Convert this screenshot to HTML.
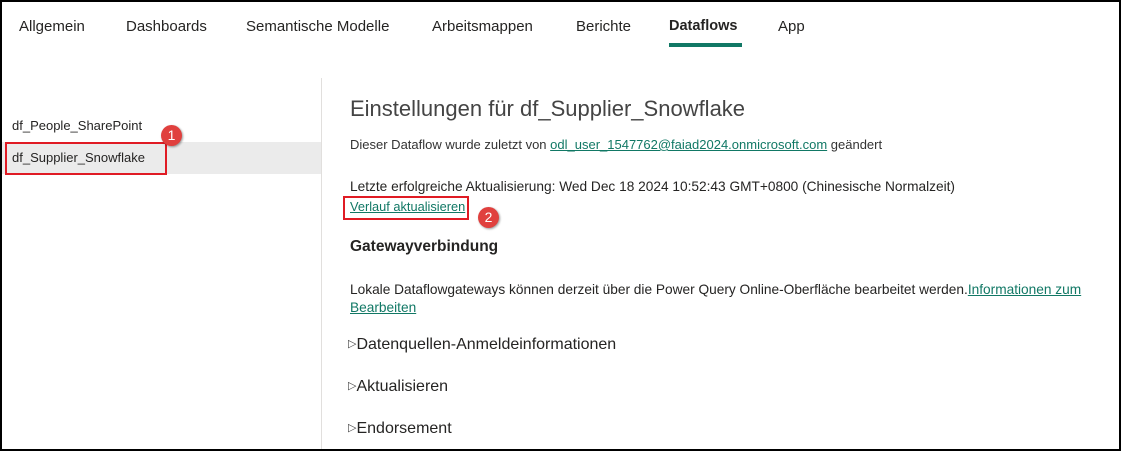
<!DOCTYPE html>
<html><head><meta charset="utf-8"><style>
body{margin:0;width:1121px;height:451px;overflow:hidden;background:#fff;font-family:"Liberation Sans",sans-serif;color:#252423;position:relative}
.frame{position:absolute;left:0;top:0;width:1117px;height:447px;border:2px solid #000}
.a{position:absolute;white-space:nowrap}
.nav{top:18px;font-size:15px}
.ul{position:absolute;left:669px;top:43px;width:73px;height:4px;background:#117865}
.div{position:absolute;left:321px;top:78px;width:1px;height:373px;background:#e1dfdd}
.sel{position:absolute;left:2px;top:142px;width:319px;height:32px;background:#ebebeb}
.box{position:absolute;border:2px solid #e01b24}
.badge{position:absolute;width:21px;height:21px;border-radius:50%;background:#e0403e;color:#fff;font-size:14px;text-align:center;line-height:21px;box-shadow:1px 1px 2px rgba(0,0,0,.4)}
.s{font-size:13.7px}
.lnk{color:#117865;text-decoration:underline}
.tri{font-size:11px;color:#444;position:relative;top:-2px}
.acc{font-size:16px}
</style></head><body>
<div class="a nav" style="left:19px">Allgemein</div>
<div class="a nav" style="left:126px">Dashboards</div>
<div class="a nav" style="left:246px">Semantische Modelle</div>
<div class="a nav" style="left:432px">Arbeitsmappen</div>
<div class="a nav" style="left:576px">Berichte</div>
<div class="a nav" style="left:669px;font-weight:bold;font-size:14.5px">Dataflows</div>
<div class="a nav" style="left:778px">App</div>
<div class="ul"></div>
<div class="div"></div>
<div class="sel"></div>
<div class="a" style="left:12px;top:118px;font-size:13px">df_People_SharePoint</div>
<div class="a" style="left:12px;top:150px;font-size:13px">df_Supplier_Snowflake</div>
<div class="box" style="left:5px;top:142px;width:158px;height:29px"></div>
<div class="badge" style="left:161px;top:125px">1</div>
<div class="a" style="left:350px;top:96px;font-size:22px;color:#444">Einstellungen für df_Supplier_Snowflake</div>
<div class="a" style="left:350px;top:137px;font-size:13px;color:#333">Dieser Dataflow wurde zuletzt von <span class="lnk">odl_user_1547762@faiad2024.onmicrosoft.com</span> geändert</div>
<div class="a s" style="left:350px;top:179px">Letzte erfolgreiche Aktualisierung: Wed Dec 18 2024 10:52:43 GMT+0800 (Chinesische Normalzeit)</div>
<div class="a lnk" style="left:350px;top:199px;font-size:12.8px">Verlauf aktualisieren</div>
<div class="box" style="left:343px;top:196px;width:122px;height:20px"></div>
<div class="badge" style="left:478px;top:207px">2</div>
<div class="a" style="left:350px;top:238px;font-size:15.5px;font-weight:bold">Gatewayverbindung</div>
<div class="a s" style="left:350px;top:282px">Lokale Dataflowgateways können derzeit über die Power Query Online-Oberfläche bearbeitet werden.<span class="lnk">Informationen zum</span></div>
<div class="a s lnk" style="left:350px;top:300px">Bearbeiten</div>
<div class="a acc" style="left:348px;top:336px"><span class="tri">▷</span>Datenquellen-Anmeldeinformationen</div>
<div class="a acc" style="left:348px;top:378px"><span class="tri">▷</span>Aktualisieren</div>
<div class="a acc" style="left:348px;top:420px"><span class="tri">▷</span>Endorsement</div>
<div class="frame"></div>
</body></html>
